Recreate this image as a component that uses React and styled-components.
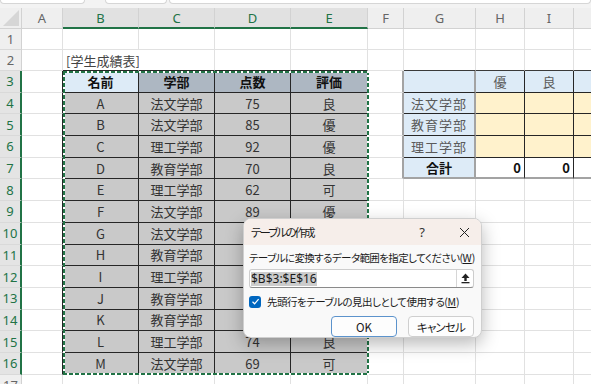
import styled, { createGlobalStyle } from "styled-components";

const GlobalStyle = createGlobalStyle`
  body {
    margin: 0;
    background: #ffffff;
    font-family: "Noto Sans CJK JP", "Noto Sans", sans-serif;
  }
`;

const GREEN = "#217346";
const GRID = "1px solid #e1e1e1";
const INK = "1px solid #262626";
const GREY_THICK = "2px solid #a3a3a3";

const COLS = ["A", "B", "C", "D", "E", "F", "G", "H", "I", "J"];
const WIDTHS = [41, 76, 76, 76, 77, 36, 72, 49, 49, 49];

const students = [
  ["A", "法文学部", 75, "良"],
  ["B", "法文学部", 85, "優"],
  ["C", "理工学部", 92, "優"],
  ["D", "教育学部", 70, "良"],
  ["E", "理工学部", 62, "可"],
  ["F", "法文学部", 89, "優"],
  ["G", "法文学部", 78, "良"],
  ["H", "教育学部", 95, "優"],
  ["I", "理工学部", 58, "可"],
  ["J", "教育学部", 81, "優"],
  ["K", "教育学部", 66, "可"],
  ["L", "理工学部", 74, "良"],
  ["M", "法文学部", 69, "可"],
];

const summary = ["法文学部", "教育学部", "理工学部"];

const Page = styled.div`
  position: relative;
  width: 591px;
  height: 384px;
  overflow: hidden;
  background: #ffffff;
`;

const TopStrip = styled.div`
  display: flex;
  height: 8px;
  background: #f3f3f3;
`;

const FormulaBox = styled.div`
  height: 3px;
  width: ${(p) => (p.$w ? `${p.$w}px` : "auto")};
  flex: ${(p) => (p.$w ? "none" : 1)};
  margin-left: ${(p) => p.$ml || 0}px;
  background: #ffffff;
  border: 1px solid #d6d6d6;
  border-top: none;
  border-radius: 0 0 4px 4px;
`;

const Sheet = styled.div`
  display: grid;
  grid-template-columns: 22px ${WIDTHS.map((w) => `${w}px`).join(" ")};
  grid-template-rows: 21px 21px 21px repeat(15, 21.7px);
`;

const Corner = styled.div`
  box-sizing: border-box;
  display: flex;
  align-items: flex-end;
  justify-content: flex-end;
  padding: 0 2px 2px 0;
  background: #efefef;
  border-right: 1px solid #d2d2d2;
  border-bottom: 1px solid #d2d2d2;
`;

const ColHead = styled.div`
  box-sizing: border-box;
  display: flex;
  align-items: center;
  justify-content: center;
  background: ${(p) => (p.$sel ? "#e1e1e1" : "#efefef")};
  color: ${(p) => (p.$sel ? GREEN : "#666666")};
  border-right: 1px solid #d2d2d2;
  border-bottom: ${(p) => (p.$sel ? `2px solid ${GREEN}` : "1px solid #d2d2d2")};
  font-family: "Noto Sans", sans-serif;
  font-size: 13px;
  padding-top: ${(p) => (p.$sel ? 1 : 0)}px;
`;

const RowHead = styled.div`
  box-sizing: border-box;
  display: flex;
  align-items: center;
  justify-content: center;
  background: ${(p) => (p.$sel ? "#e4e4e4" : "#efefef")};
  color: ${(p) => (p.$sel ? GREEN : "#666666")};
  border-right: ${(p) => (p.$sel ? `2px solid ${GREEN}` : "1px solid #d2d2d2")};
  border-bottom: 1px solid #d9d9d9;
  font-family: "Noto Sans", sans-serif;
  font-size: 13px;
`;

const Cell = styled.div`
  box-sizing: border-box;
  display: flex;
  align-items: center;
  justify-content: ${(p) => p.$align || "center"};
  padding: 0 3px;
  min-width: 0;
  white-space: nowrap;
  background: ${(p) => p.$bg || "#ffffff"};
  color: ${(p) => p.$color || "#333333"};
  font-weight: ${(p) => (p.$bold ? 700 : 400)};
  letter-spacing: ${(p) => p.$ls || 0}px;
  border-right: ${(p) => p.$rb};
  border-bottom: ${(p) => p.$bb};
  font-size: 13px;
`;

const Marquee = styled.div`
  position: absolute;
  left: 63px;
  top: 71px;
  width: 306px;
  height: 304px;
  box-sizing: border-box;
  pointer-events: none;
  background:
    repeating-linear-gradient(90deg, ${GREEN} 0 4px, #ffffff 4px 6px) top left / 100% 2px no-repeat,
    repeating-linear-gradient(90deg, ${GREEN} 0 4px, #ffffff 4px 6px) bottom left / 100% 2px no-repeat,
    repeating-linear-gradient(180deg, ${GREEN} 0 4px, #ffffff 4px 6px) top left / 2px 100% no-repeat,
    repeating-linear-gradient(180deg, ${GREEN} 0 4px, #ffffff 4px 6px) top right / 2px 100% no-repeat;
`;

const Dialog = styled.div`
  position: absolute;
  left: 243px;
  top: 218px;
  width: 239px;
  height: 120px;
  box-sizing: border-box;
  border: 1px solid #cfcfcf;
  border-radius: 8px;
  background: #f9f9f9;
  box-shadow: 0 6px 18px rgba(0, 0, 0, 0.28);
  overflow: hidden;
  font-feature-settings: "palt";
  color: #1b1b1b;
`;

const TitleBar = styled.div`
  display: flex;
  align-items: center;
  height: 26px;
  padding: 0 10px 0 7px;
  background: #f6eeea;
`;

const Title = styled.span`
  flex: 1;
  font-size: 11.5px;
  letter-spacing: -1.9px;
`;

const TitleButton = styled.span`
  display: flex;
  align-items: center;
  justify-content: center;
  width: ${(p) => p.$w}px;
  margin-right: ${(p) => p.$mr || 0}px;
  font-family: "Noto Sans", sans-serif;
  font-size: 13px;
  color: #333333;
`;

const Body = styled.div`
  display: flex;
  flex-direction: column;
  padding: 6px 7px 0 5px;
`;

const Label = styled.div`
  font-size: 10.5px;
  line-height: 14px;
  white-space: nowrap;
  letter-spacing: -0.6px;
`;

const Key = styled.span`
  text-decoration: underline;
  letter-spacing: 0;
`;

const RangeInput = styled.div`
  display: flex;
  align-items: stretch;
  height: 19px;
  margin-top: 4px;
  box-sizing: border-box;
  background: #ffffff;
  border: 1px solid #cdcdcd;
  border-bottom-color: #8a8a8a;
  border-radius: 3px;
`;

const RangeText = styled.div`
  flex: 1;
  display: flex;
  align-items: center;
  padding-left: 1px;
`;

const Selected = styled.span`
  background: #cccccc;
  color: #1b1b1b;
  font-family: "Noto Sans", sans-serif;
  font-size: 12px;
  line-height: 14px;
`;

const CollapseButton = styled.div`
  width: 16px;
  display: flex;
  align-items: center;
  justify-content: center;
  border-left: 1px solid #d6d6d6;
`;

const CheckRow = styled.div`
  display: flex;
  align-items: center;
  gap: 6px;
  margin-top: 6px;
  font-size: 10.5px;
  white-space: nowrap;
  letter-spacing: -0.5px;
`;

const CheckBox = styled.div`
  width: 12px;
  height: 12px;
  border-radius: 3px;
  background: #0067c0;
  display: flex;
  align-items: center;
  justify-content: center;
`;

const Buttons = styled.div`
  display: flex;
  justify-content: flex-end;
  gap: 11px;
  margin-top: 7px;
`;

const Button = styled.div`
  box-sizing: border-box;
  width: 66px;
  height: 21px;
  display: flex;
  align-items: center;
  justify-content: center;
  background: #fdfdfd;
  border: 1px solid ${(p) => (p.$primary ? "#5c93cc" : "#cfcfcf")};
  border-radius: 4px;
  font-size: 11.5px;
  letter-spacing: ${(p) => (p.$primary ? 0 : -0.8)}px;
  color: #1b1b1b;
`;

function cellInfo(c, r) {
  const info = { text: "", rb: GRID, bb: GRID };
  const inMain = c >= 1 && c <= 4 && r >= 3 && r <= 16;
  const inSummary = c >= 6 && r >= 3 && r <= 7;

  if (inMain) {
    info.rb = INK;
    info.bb = INK;
    if (r === 3) {
      info.text = ["名前", "学部", "点数", "評価"][c - 1];
      info.bold = true;
      info.color = "#111111";
      info.bg = c === 1 ? "#ddebf7" : "#adb7c2";
    } else {
      info.text = students[r - 4][c - 1];
      info.bg = "#c9c9c9";
    }
  }
  if (c === 0 && r >= 3 && r <= 16) info.rb = INK;
  if (r === 2 && c >= 1 && c <= 4) info.bb = INK;
  if (r === 2 && c === 1) {
    info.text = "[学生成績表]";
    info.align = "flex-start";
    info.color = "#444444";
    info.rb = "1px solid #ffffff";
  }

  if (inSummary) {
    info.rb = c === 6 ? GREY_THICK : INK;
    info.bb = r === 7 ? GREY_THICK : INK;
    info.color = "#5a5a5a";
    if (r === 3) {
      info.bg = "#ddebf7";
      info.text = ["", "優", "良", "可"][c - 6];
    } else if (r === 7) {
      info.bg = c === 6 ? "#ddebf7" : "#ffffff";
      info.bold = true;
      info.color = "#111111";
      info.text = c === 6 ? "合計" : "0";
      info.align = c === 6 ? "center" : "flex-end";
    } else {
      info.bg = c === 6 ? "#ddebf7" : "#fff2cc";
      if (c === 6) {
        info.text = summary[r - 4];
        info.ls = 1;
      }
    }
  }
  if (c === 5 && r >= 3 && r <= 7) info.rb = GREY_THICK;
  if (r === 2 && c >= 6) info.bb = "1px solid #3a3a3a";

  return info;
}

function SelectAllMark() {
  return (
    <svg width="16" height="16" viewBox="0 0 16 16">
      <polygon points="16,0 16,16 0,16" fill="#d6d6d6" />
    </svg>
  );
}

function CollapseIcon() {
  return (
    <svg width="9" height="11" viewBox="0 0 9 11">
      <polygon points="4.5,0.5 8.5,5 0.5,5" fill="#222222" />
      <rect x="3.3" y="4.5" width="2.4" height="3.5" fill="#222222" />
      <rect x="0.5" y="9" width="8" height="1.3" fill="#222222" />
    </svg>
  );
}

function CheckMark() {
  return (
    <svg width="9" height="9" viewBox="0 0 9 9">
      <path d="M1.5 4.8 L3.6 6.8 L7.6 2.2" stroke="#ffffff" strokeWidth="1.2" fill="none" />
    </svg>
  );
}

function CloseIcon() {
  return (
    <svg width="11" height="11" viewBox="0 0 11 11">
      <path d="M1 1 L10 10 M10 1 L1 10" stroke="#222222" strokeWidth="1" />
    </svg>
  );
}

export default function App() {
  const rows = Array.from({ length: 17 }, (_, i) => i + 1);

  return (
    <Page>
      <GlobalStyle />
      <TopStrip>
        <FormulaBox $w={83} />
        <FormulaBox $w={60} $ml={20} />
        <FormulaBox $ml={2} />
      </TopStrip>
      <Sheet>
        <Corner>
          <SelectAllMark />
        </Corner>
        {COLS.map((name, c) => (
          <ColHead key={name} $sel={c >= 1 && c <= 4}>
            {c === 9 ? "" : name}
          </ColHead>
        ))}
        {rows.map((r) => [
          <RowHead key={`h${r}`} $sel={r >= 3 && r <= 16}>
            {r}
          </RowHead>,
          ...COLS.map((name, c) => {
            const info = cellInfo(c, r);
            return (
              <Cell
                key={`${name}${r}`}
                $bg={info.bg}
                $color={info.color}
                $bold={info.bold}
                $align={info.align}
                $ls={info.ls}
                $rb={info.rb}
                $bb={info.bb}
              >
                {info.text}
              </Cell>
            );
          }),
        ])}
      </Sheet>
      <Marquee />
      <Dialog>
        <TitleBar>
          <Title>テーブルの作成</Title>
          <TitleButton $w={14} $mr={28}>?</TitleButton>
          <TitleButton $w={14}>
            <CloseIcon />
          </TitleButton>
        </TitleBar>
        <Body>
          <Label>
            テーブルに変換するデータ範囲を指定してください(<Key>W</Key>)
          </Label>
          <RangeInput>
            <RangeText>
              <Selected>$B$3:$E$16</Selected>
            </RangeText>
            <CollapseButton>
              <CollapseIcon />
            </CollapseButton>
          </RangeInput>
          <CheckRow>
            <CheckBox>
              <CheckMark />
            </CheckBox>
            <span>
              先頭行をテーブルの見出しとして使用する(<Key>M</Key>)
            </span>
          </CheckRow>
          <Buttons>
            <Button $primary>OK</Button>
            <Button>キャンセル</Button>
          </Buttons>
        </Body>
      </Dialog>
    </Page>
  );
}
